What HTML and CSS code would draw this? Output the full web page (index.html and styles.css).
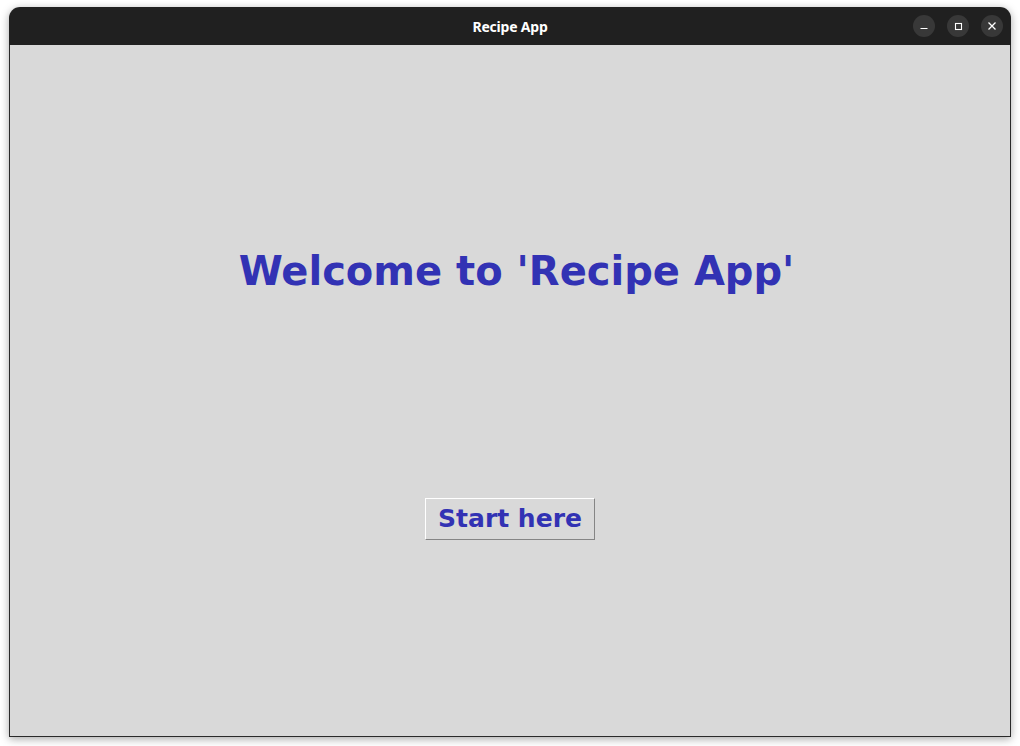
FILE: index.html
```html
<!DOCTYPE html>
<html>
<head>
<meta charset="utf-8">
<link rel="stylesheet" href="styles.css">
</head>
<body>
<div class="window">
  <div class="titlebar">
    <span class="title">Recipe App</span>
    <div class="controls">
      <span class="ctl">
        <svg width="10" height="10" viewBox="0 0 10 10"><path d="M1.5 7.5h7" stroke="#fff" stroke-width="1.2"/></svg>
      </span>
      <span class="ctl">
        <svg width="10" height="10" viewBox="0 0 10 10"><rect x="2.5" y="2.5" width="6" height="6" fill="none" stroke="#fff" stroke-width="1.1"/></svg>
      </span>
      <span class="ctl">
        <svg width="10" height="10" viewBox="0 0 10 10"><path d="M1.5 1.5l7 7M8.5 1.5l-7 7" stroke="#fff" stroke-width="1.3"/></svg>
      </span>
    </div>
  </div>
  <div class="content">
    <h1 class="welcome">Welcome to 'Recipe App'</h1>
    <button class="start">Start here</button>
  </div>
</div>
</body>
</html>
```

FILE: styles.css
```css
html, body {
  margin: 0;
  padding: 0;
  background: #ffffff;
}
body {
  width: 1020px;
  height: 746px;
  overflow: hidden;
}
.window {
  margin: 7px 0 0 9px;
  width: 1002px;
  height: 730px;
  display: flex;
  flex-direction: column;
  border-radius: 11px 11px 0 0;
  box-shadow: 0 2px 9px rgba(0, 0, 0, 0.35);
  overflow: hidden;
}
.titlebar {
  height: 38px;
  background: #202020;
  display: flex;
  align-items: center;
  justify-content: center;
  position: relative;
  flex: none;
}
.title {
  color: #ffffff;
  font-family: "Noto Sans", "DejaVu Sans", sans-serif;
  font-weight: bold;
  font-size: 14px;
  letter-spacing: -0.2px;
}
.controls {
  position: absolute;
  right: 8px;
  top: 8px;
  display: flex;
  gap: 12px;
}
.ctl {
  width: 22px;
  height: 22px;
  border-radius: 50%;
  background: #383838;
  display: flex;
  align-items: center;
  justify-content: center;
}
.content {
  flex: 1;
  background: #d9d9d9;
  border: 1px solid #2a2a2a;
  border-top: none;
  display: flex;
  flex-direction: column;
  align-items: center;
  padding-top: 203px;
}
.welcome {
  margin: 0 0 0 13px;
  font-family: "DejaVu Sans", sans-serif;
  font-weight: bold;
  font-size: 40px;
  line-height: 47px;
  color: #3232b4;
}
.start {
  margin-top: 203px;
  background: #d9d9d9;
  border: 1px solid;
  border-color: #ffffff #858585 #858585 #ffffff;
  padding: 5px 12px 6px;
  font-family: "DejaVu Sans", sans-serif;
  font-weight: bold;
  font-size: 25px;
  line-height: 29px;
  color: #3232b4;
}
```
